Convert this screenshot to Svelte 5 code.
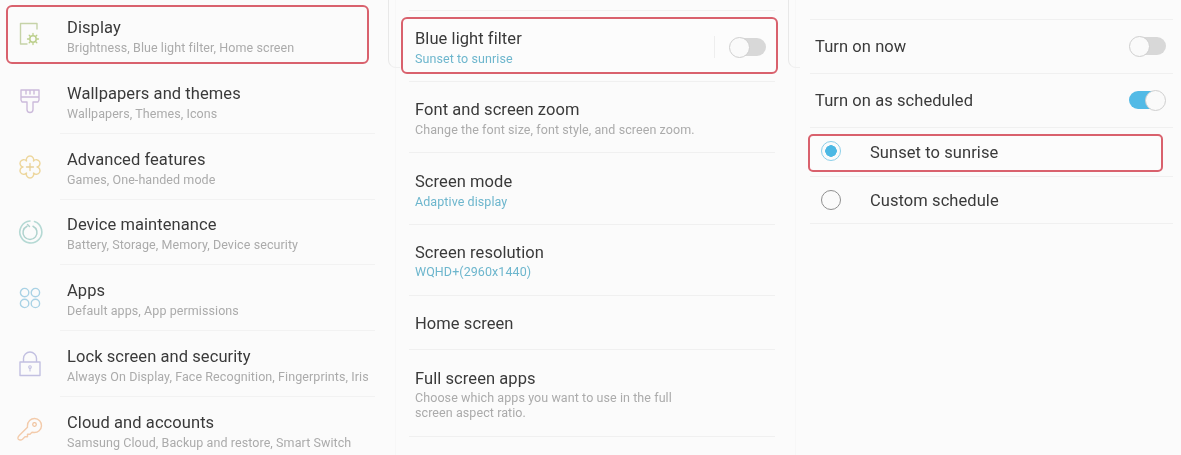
<script>
  const settings = [
    { icon: 'display', title: 'Display', sub: 'Brightness, Blue light filter, Home screen', hl: true },
    { icon: 'brush', title: 'Wallpapers and themes', sub: 'Wallpapers, Themes, Icons' },
    { icon: 'flower', title: 'Advanced features', sub: 'Games, One-handed mode' },
    { icon: 'care', title: 'Device maintenance', sub: 'Battery, Storage, Memory, Device security' },
    { icon: 'apps', title: 'Apps', sub: 'Default apps, App permissions' },
    { icon: 'lock', title: 'Lock screen and security', sub: 'Always On Display, Face Recognition, Fingerprints, Iris' },
    { icon: 'key', title: 'Cloud and accounts', sub: 'Samsung Cloud, Backup and restore, Smart Switch' }
  ];
</script>

<div class="page">
  <section class="col col1">
    {#each settings as s, i}
      <div class="srow" class:hl={s.hl} class:nodiv={i < 1 || i === settings.length - 1}>
        <svg class="ico" viewBox="0 0 28 28" fill="none" stroke-linecap="round" stroke-linejoin="round">
          {#if s.icon === 'display'}
            <path d="M21 9V3.5H4.5V24H11" stroke="#c6d3a8" stroke-width="1.4" />
            <circle cx="17" cy="19" r="3.2" stroke="#bccf8c" stroke-width="1.5" />
            <path d="M17 13.5v1.5M17 23v1.5M11.5 19H13M21 19h1.5M13.2 15.2l1 1M19.8 21.8l1 1M13.2 22.800l1-1M19.8 16.2l1-1" stroke="#bccf8c" stroke-width="1.3" />
          {:else if s.icon === 'brush'}
            <path d="M5 3h18v10l-1 2h-5v7.5a3 3 0 0 1-6 0V15H6l-1-2zM5 10h18M10 3v4M14 3v4M18 3v4" stroke="#ccbbdb" stroke-width="1.4" />
          {:else if s.icon === 'flower'}
            <path d="M21 14A3.7 3.7 0 1 0 17.5 7.94A3.7 3.7 0 1 0 10.5 7.94A3.7 3.7 0 1 0 7 14A3.7 3.7 0 1 0 10.5 20.06A3.7 3.7 0 1 0 17.5 20.06A3.7 3.7 0 1 0 21 14Z" stroke="#edd69c" stroke-width="1.4" />
            <path d="M14 10.5v7M10.500 14h7" stroke="#e8d096" stroke-width="1.3" />
          {:else if s.icon === 'care'}
            <path d="M18.5 3.6A11 11 0 1 1 14 3" stroke="#b5d9d4" stroke-width="1.6" />
            <path d="M11 8.2a7 7 0 1 0 6 0" stroke="#aed2cd" stroke-width="1.5" />
            <path d="M11.5 6.5l2 2" stroke="#aed2cd" stroke-width="1.4" />
          {:else if s.icon === 'apps'}
            <g stroke="#a9d2e5" stroke-width="1.4">
              <circle cx="8.6" cy="8.6" r="4.2" /><circle cx="19.4" cy="8.6" r="4.2" />
              <circle cx="8.6" cy="19.4" r="4.2" /><circle cx="19.4" cy="19.4" r="4.2" />
            </g>
          {:else if s.icon === 'lock'}
            <path d="M4 12h20v13.5H4zM7.5 12V8.5a6.5 6.500 0 0 1 13 0V12" stroke="#c2c0e1" stroke-width="1.4" />
            <circle cx="14" cy="17" r="1.3" stroke="#c2c0e1" stroke-width="1.1" /><path d="M14 18.3v2.7" stroke="#c2c0e1" stroke-width="1.1" />
          {:else}
            <path d="M11.5 9.5a7 7 0 1 1 6.500 7l-2-.2-2 2h-2.500v2.500H9l-2.500 2.500c-1.500 1.200-4 .8-4.500-.5-.4-1.200.3-2.300 1.200-3.200l8.300-8.300a7 7 0 0 1 0-1.800z" stroke="#f3cbab" stroke-width="1.4" />
            <circle cx="18.5" cy="8.5" r="1.8" stroke="#efc19c" stroke-width="1.2" />
          {/if}
        </svg>
        <div class="stext">
          <div class="title">{s.title}</div>
          <div class="sub">{s.sub}</div>
        </div>
      </div>
    {/each}
  </section>

  <section class="col col2">
    <span class="corner"></span>
    <div class="mrow hlrow">
      <div class="mtext">
        <div class="title">Blue light filter</div>
        <div class="sub blue">Sunset to sunrise</div>
      </div>
      <span class="vline"></span>
      <span class="toggle"></span>
    </div>
    <div class="mrow r71"><div class="mtext"><div class="title">Font and screen zoom</div><div class="sub">Change the font size, font style, and screen zoom.</div></div></div>
    <div class="mrow r71 rmode"><div class="mtext"><div class="title">Screen mode</div><div class="sub blue">Adaptive display</div></div></div>
    <div class="mrow r71"><div class="mtext"><div class="title">Screen resolution</div><div class="sub blue">WQHD+(2960x1440)</div></div></div>
    <div class="mrow r55"><div class="mtext"><div class="title">Home screen</div></div></div>
    <div class="mrow r86"><div class="mtext"><div class="title">Full screen apps</div><div class="sub two">Choose which apps you want to use in the full screen aspect ratio.</div></div></div>
  </section>

  <section class="col col3">
    <span class="corner"></span>
    <div class="prow"><span class="title">Turn on now</span><span class="toggle"></span></div>
    <div class="prow"><span class="title">Turn on as scheduled</span><span class="toggle on"></span></div>
    <div class="rad hlradio"><span class="radio sel"></span><span class="title">Sunset to sunrise</span></div>
    <div class="rad cust"><span class="radio"></span><span class="title">Custom schedule</span></div>
  </section>
</div>

<style>
  :global(body) { margin: 0; background: #fbfbfb; }
  .page {
    width: 1181px; height: 455px; overflow: hidden; display: grid;
    grid-template-columns: 395px 400px 386px;
    background: #fbfbfb;
    font-family: Roboto, "Liberation Sans", sans-serif;
    filter: blur(0.35px);
  }
  .col { position: relative; box-sizing: border-box; height: 455px; }
  .col2, .col3 { border-left: 1px solid #f7f7f7; }
  .corner {
    position: absolute; left: -8px; top: -10px; width: 12px; height: 78px;
    border: 1px solid #e8e8e8; border-width: 0 0 1px 1px; border-bottom-left-radius: 8px;
    border-bottom-color: #f0f0f0; box-sizing: border-box;
  }
  .title { font-size: 16.5px; line-height: 20px; color: #3a3a3a; letter-spacing: 0.07px; white-space: nowrap; }
  .sub { font-size: 12.5px; line-height: 16px; color: #ababab; margin-top: 2px; letter-spacing: 0.08px; white-space: nowrap; }
  .blue { color: #6db6cd; }

  .srow { position: relative; height: 65.8px; display: flex; align-items: center; box-sizing: border-box; padding-left: 16px; }
  .srow:first-of-type { height: 68px; }
  .srow::after {
    content: ""; position: absolute; left: 60px; right: 20px; bottom: 0; height: 1px; background: #f2f2f2;
  }
  .srow.nodiv::after { display: none; }
  .srow.hl::before {
    content: ""; position: absolute; left: 6px; top: 5px; width: 363px; height: 59px; box-sizing: border-box;
    border: 2px solid #d9616d; border-radius: 6px;
  }
  .ico { width: 28px; height: 28px; flex: none; margin-right: 23px; }
  .stext { margin-top: 4px; }
  .hl .stext { margin-top: 6px; }

  .col2 { padding-top: 10px; }
  .mrow { position: relative; box-sizing: border-box; padding-left: 19px; display: flex; align-items: center; }
  .mrow::after { content: ""; position: absolute; left: 13px; right: 20px; top: 0; height: 1px; background: #f0f0f0; }
  .hlrow { height: 71px; }
  .hlrow::before {
    content: ""; position: absolute; left: 5px; top: 7px; width: 377px; height: 57px; box-sizing: border-box;
    border: 2px solid #d9616d; border-radius: 6px; background: #fcfcfc;
  }
  .hlrow > * { position: relative; }
  .mtext { flex: 1; padding-top: 5px; }
  .r71 { height: 71.3px; }
  .r71 .sub { margin-top: 1.5px; }
  .rmode .mtext { padding-top: 6px; }
  .r55 { height: 54.5px; }
  .r55 .mtext { padding-top: 3px; }
  .r86 { height: 87.5px; }
  .r86 .mtext { padding-top: 2px; }
  .r86::before { content: ""; position: absolute; left: 13px; right: 20px; bottom: 0; height: 1px; background: #f0f0f0; }
  .two { white-space: normal; width: 285px; line-height: 15px; margin-top: 1px; }
  .vline { width: 1px; height: 22px; background: #eeeeee; margin: 3px 14px 0 0; }
  .toggle {
    position: relative; display: block; flex: none; width: 37px; height: 18px; margin: 3px 29px 0 0;
    border-radius: 9px; background: linear-gradient(90deg, transparent 11px, #d8d8d8 11px);
  }
  .toggle::after {
    content: ""; position: absolute; left: 0; top: -1.5px; width: 21px; height: 21px; border-radius: 50%;
    background: #fafafa; box-sizing: border-box; border: 1px solid #cfcfcf;
  }
  .toggle.on { background: linear-gradient(90deg, #52bae6 26px, transparent 26px); }
  .toggle.on::after { left: 16px; }

  .col3 { padding-top: 19px; }
  .prow { position: relative; display: flex; justify-content: space-between; align-items: center; box-sizing: border-box; padding-left: 19px; height: 54px; }
  .prow .title { padding-top: 2px; }
  .prow .toggle { margin: 0 15px 0 0; }
  .prow::after, .rad::after { content: ""; position: absolute; left: 14px; right: 8px; top: 0; height: 1px; background: #f0f0f0; }
  .rad { position: relative; display: flex; align-items: center; box-sizing: border-box; padding-left: 25px; gap: 29px; }
  .rad .title { padding-top: 3px; }
  .cust .title { padding-top: 1px; }
  .hlradio { height: 49px; padding-bottom: 1px; }
  .cust { height: 48px; }
  .cust::before { content: ""; position: absolute; left: 14px; right: 8px; bottom: 0; height: 1px; background: #f0f0f0; }
  .hlradio::before {
    content: ""; position: absolute; left: 12px; top: 7px; width: 355px; height: 38px; box-sizing: border-box;
    border: 2px solid #d9616d; border-radius: 5px; background: #fcfcfc;
  }
  .hlradio > * { position: relative; }
  .radio {
    flex: none; width: 20px; height: 20px; box-sizing: border-box; border-radius: 50%;
    border: 1.5px solid #8f8f8f; background: #fbfbfb;
  }
  .radio.sel {
    border-color: #8ccfe9;
    background: radial-gradient(circle, #4cb8e4 0 5.5px, #fbfbfb 6px);
  }
</style>
